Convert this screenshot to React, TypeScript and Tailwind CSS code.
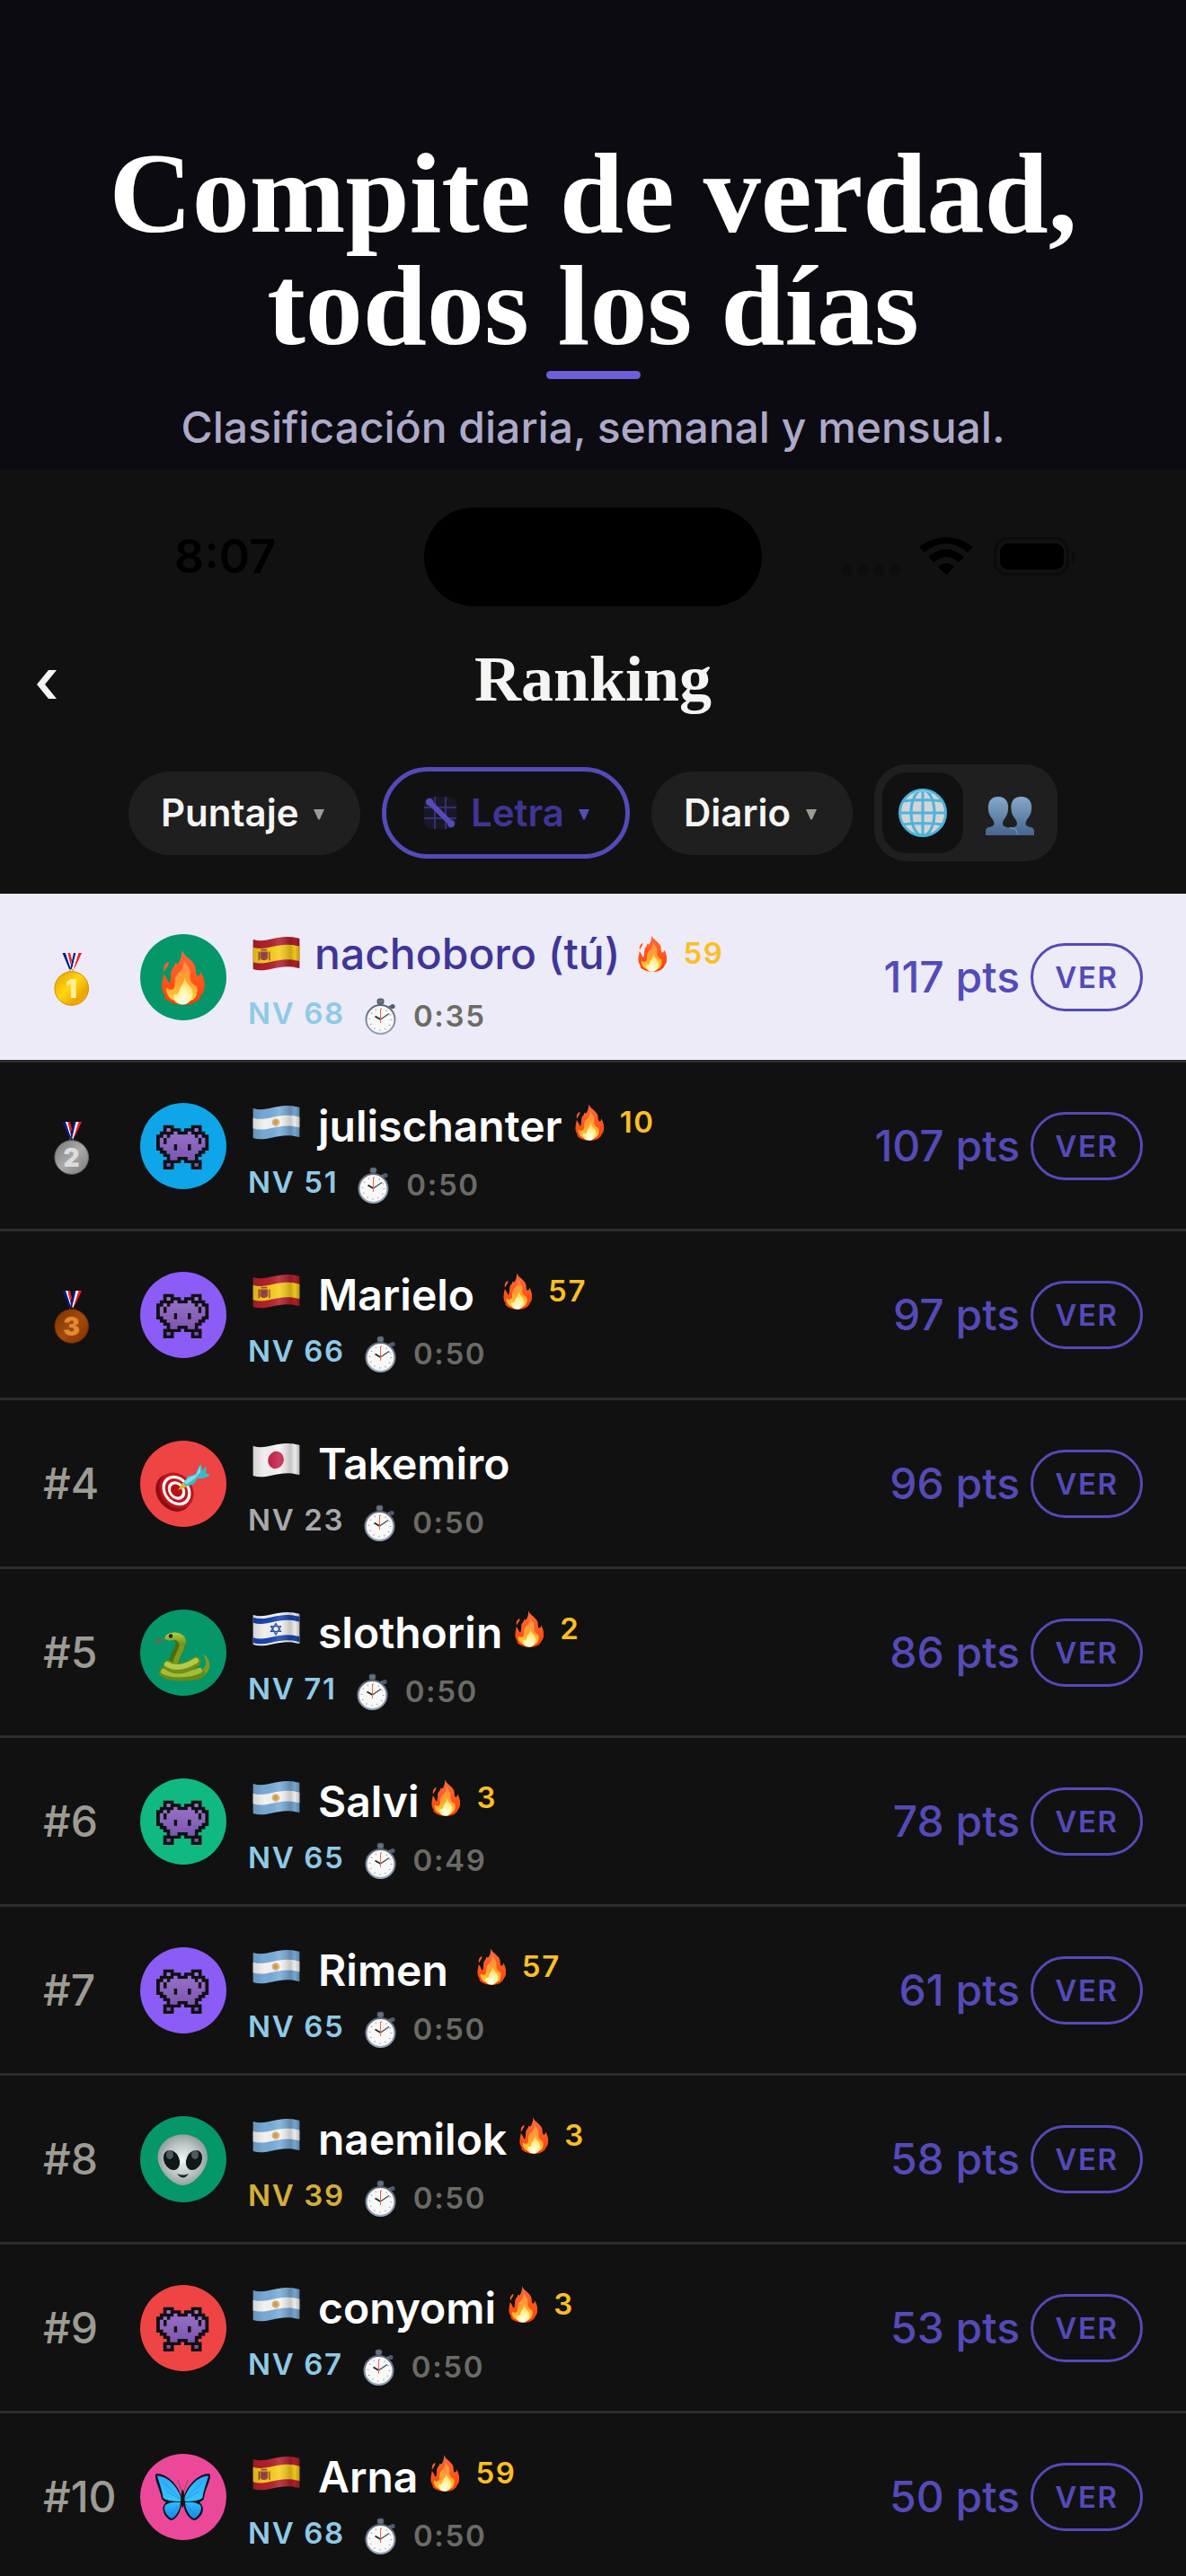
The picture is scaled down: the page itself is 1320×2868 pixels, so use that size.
import type { ReactNode } from 'react';
import clsx from 'clsx';

type Player = {
  rank: number;
  name: string;
  country: 'es' | 'ar' | 'jp' | 'il';
  avatar: 'flame' | 'invader' | 'dart' | 'snake' | 'alien' | 'butterfly';
  color: string;
  level: number;
  levelColor: string;
  time: string;
  streak?: number;
  points: number;
  me?: boolean;
  spaced?: boolean;
};

const players: Player[] = [
  { rank: 1, name: 'nachoboro (tú)', country: 'es', avatar: 'flame', color: 'bg-[#059669]', level: 68, levelColor: 'text-[#8ecae6]', time: '0:35', streak: 59, points: 117, me: true },
  { rank: 2, name: 'julischanter', country: 'ar', avatar: 'invader', color: 'bg-[#0ea5e9]', level: 51, levelColor: 'text-[#8ecae6]', time: '0:50', streak: 10, points: 107 },
  { rank: 3, name: 'Marielo', country: 'es', avatar: 'invader', color: 'bg-[#8b5cf6]', level: 66, levelColor: 'text-[#8ecae6]', time: '0:50', streak: 57, points: 97, spaced: true },
  { rank: 4, name: 'Takemiro', country: 'jp', avatar: 'dart', color: 'bg-[#ef4444]', level: 23, levelColor: 'text-[#a8a9ad]', time: '0:50', points: 96 },
  { rank: 5, name: 'slothorin', country: 'il', avatar: 'snake', color: 'bg-[#059669]', level: 71, levelColor: 'text-[#8ecae6]', time: '0:50', streak: 2, points: 86 },
  { rank: 6, name: 'Salvi', country: 'ar', avatar: 'invader', color: 'bg-[#10b981]', level: 65, levelColor: 'text-[#8ecae6]', time: '0:49', streak: 3, points: 78 },
  { rank: 7, name: 'Rimen', country: 'ar', avatar: 'invader', color: 'bg-[#8b5cf6]', level: 65, levelColor: 'text-[#8ecae6]', time: '0:50', streak: 57, points: 61, spaced: true },
  { rank: 8, name: 'naemilok', country: 'ar', avatar: 'alien', color: 'bg-[#059669]', level: 39, levelColor: 'text-[#d4af37]', time: '0:50', streak: 3, points: 58 },
  { rank: 9, name: 'conyomi', country: 'ar', avatar: 'invader', color: 'bg-[#ef4444]', level: 67, levelColor: 'text-[#8ecae6]', time: '0:50', streak: 3, points: 53 },
  { rank: 10, name: 'Arna', country: 'es', avatar: 'butterfly', color: 'bg-[#ec4899]', level: 68, levelColor: 'text-[#8ecae6]', time: '0:50', streak: 59, points: 50 },
];

/* GRADIENTS shared by every icon */
function IconDefs() {
  return (
    <svg className="absolute h-0 w-0" aria-hidden="true">
      <defs>
        <linearGradient id="fire" x1="0" y1="0" x2="0" y2="1">
          <stop offset="0" stopColor="#ff6a3c" />
          <stop offset="0.45" stopColor="#ff5a1f" />
          <stop offset="1" stopColor="#ff3d0a" />
        </linearGradient>
        <linearGradient id="fireMid" x1="0" y1="0" x2="0" y2="1">
          <stop offset="0" stopColor="#ff8a45" />
          <stop offset="0.6" stopColor="#ffa52e" />
          <stop offset="1" stopColor="#ffd43a" />
        </linearGradient>
        <radialGradient id="fireCore" cx="0.5" cy="0.85" r="0.8">
          <stop offset="0" stopColor="#fffff0" />
          <stop offset="0.5" stopColor="#fff3a0" />
          <stop offset="1" stopColor="#ffd23a" />
        </radialGradient>
        <linearGradient id="medal1" x1="0" y1="0" x2="1" y2="1">
          <stop offset="0" stopColor="#e79a00" />
          <stop offset="0.45" stopColor="#ffd60f" />
          <stop offset="0.75" stopColor="#eca400" />
          <stop offset="1" stopColor="#f3bd1a" />
        </linearGradient>
        <linearGradient id="medal2" x1="0" y1="0" x2="1" y2="1">
          <stop offset="0" stopColor="#777" />
          <stop offset="0.5" stopColor="#aaa" />
          <stop offset="1" stopColor="#7a7a7a" />
        </linearGradient>
        <linearGradient id="medal3" x1="0" y1="0" x2="1" y2="1">
          <stop offset="0" stopColor="#7a2f04" />
          <stop offset="0.5" stopColor="#a34b0c" />
          <stop offset="1" stopColor="#7d3206" />
        </linearGradient>
        <linearGradient id="invader" x1="0" y1="0" x2="0" y2="1">
          <stop offset="0" stopColor="#9b73cc" />
          <stop offset="1" stopColor="#7650a8" />
        </linearGradient>
        <linearGradient id="cloth" x1="0" y1="0" x2="1" y2="0">
          <stop offset="0" stopColor="#000" stopOpacity="0.14" />
          <stop offset="0.25" stopColor="#000" stopOpacity="0.02" />
          <stop offset="0.55" stopColor="#fff" stopOpacity="0.12" />
          <stop offset="0.8" stopColor="#000" stopOpacity="0.2" />
          <stop offset="0.9" stopColor="#000" stopOpacity="0.04" />
          <stop offset="1" stopColor="#000" stopOpacity="0.25" />
        </linearGradient>
        <radialGradient id="alien" cx="0.5" cy="0.5" r="0.55">
          <stop offset="0" stopColor="#eef6f6" />
          <stop offset="0.6" stopColor="#b9c4c4" />
          <stop offset="1" stopColor="#8a9696" />
        </radialGradient>
        <linearGradient id="snake" x1="0" y1="0" x2="0" y2="1">
          <stop offset="0" stopColor="#b5cc3c" />
          <stop offset="1" stopColor="#6f8f16" />
        </linearGradient>
        <linearGradient id="wing" x1="0" y1="0" x2="0" y2="1">
          <stop offset="0" stopColor="#2fa8f8" />
          <stop offset="0.55" stopColor="#35c3ff" />
          <stop offset="1" stopColor="#1489ea" />
        </linearGradient>
        <linearGradient id="people" x1="0" y1="0" x2="0" y2="1">
          <stop offset="0" stopColor="#84a9cb" />
          <stop offset="1" stopColor="#45658c" />
        </linearGradient>
        <linearGradient id="rim" x1="0" y1="0" x2="0" y2="1">
          <stop offset="0" stopColor="#5c6577" />
          <stop offset="1" stopColor="#94a6bd" />
        </linearGradient>
      </defs>
    </svg>
  );
}

function FlameShape() {
  return (
    <>
      <path fill="url(#fire)" d="M23 0C25 8 35 10 38 19C39 23 38 27 40 29C42 29 44 28 44 24C47 30 49 37 48 42C48 48 44 50 43 54C40 56 39 58 36 59C32 61 28 61 24 61C18 61 13 60 10 58C7 57 5 55 3 52L5 52C1 47 0 42 1 37C1 33 3 30 2 27C6 29 6 34 9 37C12 32 9 24 13 20C15 18 15 16 16 14L18 16C21 13 23 7 23 0ZM8 13C9 18 5 20 3 25C2 19 3 16 8 13Z" />
      <path fill="url(#fireMid)" d="M25 11C28 17 33 20 32 28C31 34 35 39 39 40C41 45 40 51 37 54C33 59 15 59 10 54C6 50 5 45 6 42C10 46 14 45 15 40C15 35 15 30 18 27C22 24 26 19 25 11Z" />
      <path fill="url(#fireCore)" d="M26 30C27 38 34 40 35 47C36 55 30 61 24 61C17 61 12 56 14 49C16 51 19 50 20 46C21 40 26 38 26 30Z" />
    </>
  );
}

function Flame() {
  return (
    <svg className="mt-1 h-[41px] w-8 shrink-0" viewBox="0 0 48 61" aria-hidden="true">
      <FlameShape />
    </svg>
  );
}

function Medal({ place }: { place: number }) {
  const fill = ['url(#medal1)', 'url(#medal2)', 'url(#medal3)'][place - 1];
  const ink = ['#ffee9a', '#dcdcdc', '#e38a2c'][place - 1];
  const edge = ['#d48c00', '#6a6a6a', '#6b2903'][place - 1];
  return (
    <svg className="ml-3 h-16 w-10" viewBox="0 0 40 64" role="img" aria-label={`Puesto ${place}`}>
      <path fill="#0a1a8c" d="M9.500 5H13L19 23L17 23Z" />
      <path fill="#fff" d="M13 5H15.500L19.500 22L19 23Z" />
      <path fill="#f01c2c" d="M15.500 5H18L20 13L18.500 18Z" />
      <path fill="#0a1a8c" d="M22 5H24.500L20 23L18 23Z" />
      <path fill="#fff" d="M24.500 5H28L21.500 24H20Z" />
      <path fill="#f01c2c" d="M27.500 5H31L24.500 19L21.500 24Z" />
      <circle cx="19.500" cy="25" r="2" fill="none" stroke={edge} strokeWidth="1" />
      <circle cx="19.700" cy="44.500" r="18.800" fill={fill} stroke={edge} strokeWidth="1" />
      <text x="19.500" y="54.500" textAnchor="middle" fontSize="28" fontWeight="900" fontFamily="Inter, sans-serif" fill={ink}>
        {place}
      </text>
    </svg>
  );
}

const invaderRows = [
  '..KKK.....KKK..',
  '..KPKKK.KKKPK..',
  '.KKKKPKKKPKKKK.',
  'KKPKPPPPPPPKPKK',
  'KPKPPPPPPPPPKPK',
  'KPKPPPPPPPPPKPK',
  'KPPPPKPPPKPPPPK',
  'KKPPPKPPPKPPPKK',
  '.KKPPPPPPPPPKK.',
  '..KKPPPPPPPKK..',
  '...KPPKKKPPK...',
  '..KKKKK.KKKKK..',
  '..KPK.....KPK..',
  '..KKK.....KKK..',
];

function cells(kind: string) {
  return invaderRows
    .map((row, y) => row.split('').map((c, x) => (c === kind ? `M${x} ${y}h1.04v1.04h-1.04z` : '')).join(''))
    .join('');
}

const avatars: Record<Player['avatar'], ReactNode> = {
  flame: (
    <g transform="translate(23.500 17.500)">
      <FlameShape />
    </g>
  ),
  invader: (
    <g transform="translate(18 24.700) scale(3.870 3.520)">
      <path fill="#111014" d={cells('K')} />
      <path fill="url(#invader)" d={cells('P')} />
    </g>
  ),
  dart: (
    <>
      <ellipse cx="37" cy="58" rx="18" ry="22.500" transform="rotate(-38 37 58)" fill="#8d0f14" />
      <g transform="rotate(-38 40.500 55.500)">
        <ellipse cx="40.500" cy="55.500" rx="17.500" ry="21.500" fill="#c4141b" />
        <ellipse cx="40.500" cy="55.500" rx="14.500" ry="18" fill="#fff" />
        <ellipse cx="40.500" cy="55.500" rx="11.500" ry="14.500" fill="#c4141b" />
        <ellipse cx="40.500" cy="55.500" rx="8.800" ry="11" fill="#fff" />
        <ellipse cx="40.500" cy="55.500" rx="6" ry="7.500" fill="#b81219" />
      </g>
      <path fill="#e9b21d" d="M42 55L47 47L49 47L52 51L50 52Z" />
      <path fill="#3db8c6" d="M48 47L53 40L62 37L65 29L68 26L69 33L74 28L73 36L78 38L76 40L70 42L64 42L60 48L51 51Z" />
      <path fill="#7fdde6" d="M49 46L54 41L62 38L67 28L67 35L61 42L51 49Z" />
    </>
  ),
  snake: (
    <>
      <path fill="none" stroke="#8a5a4c" strokeWidth="1.500" d="M30 31C26 34 24 34 22 35L16 33M22 35L17 37" />
      <path fill="#7d9c20" d="M70 49C78 55 80 64 74 71C70 76 62 78 56 77L58 70C66 72 74 66 73 57Z" />
      <path fill="none" stroke="#6a8a18" strokeWidth="12" strokeLinecap="round" d="M27 70C36 75 56 74 66 71" />
      <path fill="none" stroke="#a3bd3a" strokeWidth="6" strokeLinecap="round" d="M26 69C36 74 56 73 66 68" />
      <path fill="none" stroke="#4d6b0c" strokeWidth="11" d="M43 31C49 42 39 48 37 61" />
      <path fill="none" stroke="#7d9820" strokeWidth="6" d="M45 31C51 42 41 48 39 61" />
      <path fill="none" stroke="#6f8f16" strokeWidth="11" strokeLinecap="round" d="M31 62C42 70 54 64 62 58" />
      <path fill="none" stroke="#b3cb48" strokeWidth="6" strokeLinecap="round" d="M30 61C42 68 54 62 62 57" />
      <path fill="url(#snake)" d="M27 32C28 28 33 25 39 25.500C47 26 52 31 51 38L44 40C43 36 40 33 36 34C32 35 29 34 27 32Z" />
      <circle cx="34" cy="29.500" r="2.200" fill="#2a1a10" />
    </>
  ),
  alien: (
    <>
      <path fill="url(#alien)" d="M47.500 20.500C63 20.500 75 31 75 46C75 59 60 77 47.500 77C35 77 19.500 59 19.500 46C19.500 31 32 20.500 47.500 20.500Z" />
      <ellipse cx="35" cy="49" rx="8.500" ry="11.500" transform="rotate(-25 35 49)" fill="#10181a" />
      <ellipse cx="60" cy="49" rx="8.500" ry="11.500" transform="rotate(25 60 49)" fill="#10181a" />
      <ellipse cx="33" cy="43" rx="4" ry="5" fill="#8d9a9c" opacity="0.500" />
      <ellipse cx="61" cy="43" rx="4" ry="5" fill="#8d9a9c" opacity="0.500" />
      <path d="M41 64Q47.500 67 54 64Q48 73 41 64Z" fill="#1b2426" />
    </>
  ),
  butterfly: (
    <>
      <path fill="#10131f" d="M45.500 47C42 34 30 22 18 22C14 26 22 38 24 50C25 52 28 53 29 54C22 59 26 70 34 74C38 75 45 66 46 57H48.500C49 66 57 75 61 74C70 70 73 59 66 54C67 53 70 52 71 50C72 38 81 26 77 22C65 22 53 34 49 47Z" />
      <path fill="url(#wing)" d="M46 50C42 38 32 25 19 24.500C21 32 25 42 25.500 49C29 52 36 53 45 53ZM45 54C38 53 32 54 28 57C25 62 30 70 35 72C39 71 45 62 45 54ZM49 50C53 38 63 25 76 24.500C74 32 70 42 69.500 49C66 52 59 53 50 53ZM50 54C57 53 63 54 67 57C70 62 65 70 60 72C56 71 50 62 50 54Z" />
      <path fill="none" stroke="#1a7fd4" strokeWidth="0.600" d="M45 50L26 32M45 51L30 42M45 55L35 67M50 50L69 32M50 51L65 42M50 55L60 67" />
      <path fill="none" stroke="#8c4a70" strokeWidth="1" d="M46.500 43L42 29M48 43L53 29" />
      <ellipse cx="47.300" cy="50" rx="2" ry="10" fill="#1b1410" />
    </>
  ),
};

// one waving stripe of a flag, 53px long
function stripe(y: number, h: number) {
  return `M0 ${y}C13 ${y + 4} 25 ${y - 3} 38 ${y - 3}C45 ${y - 3} 49 ${y - 2} 53 ${y - 1}v${h}C49 ${y + h - 2} 45 ${y + h - 3} 38 ${y + h - 3}C25 ${y + h - 3} 13 ${y + h + 4} 0 ${y + h}Z`;
}

function Flag({ country }: { country: Player['country'] }) {
  return (
    <svg className="mt-1.5 ml-[5px] h-[38px] w-[53px] shrink-0" viewBox="0 0 53 39" role="img" aria-label={country.toUpperCase()}>
      {country === 'es' && (
        <>
          <path fill="#b3202e" d={stripe(3, 34)} />
          <path fill="#f8ce1c" d={stripe(12, 17)} />
          <path fill="#a3473a" d="M8 17h9v8q-4.500 4-9 0zM6 17h1.500v10H6zM18 17h1.500v10H18zM9 14h7v2H9z" />
          <path fill="#5a4a86" d="M11 19h3v4h-3z" />
        </>
      )}
      {country === 'ar' && (
        <>
          <path fill="#78add9" d={stripe(3, 34)} />
          <path fill="#f7f7f7" d={stripe(14, 12)} />
          <circle cx="26" cy="19" r="4.500" fill="#dcae7c" />
          <circle cx="26" cy="19" r="2.500" fill="#d9952f" />
        </>
      )}
      {country === 'jp' && (
        <>
          <path fill="#f4f4f4" d={stripe(3, 34)} />
          <ellipse cx="26" cy="19" rx="9" ry="10" transform="rotate(20 26 19)" fill="#c8234a" />
        </>
      )}
      {country === 'il' && (
        <>
          <path fill="#f4f4f4" d={stripe(3, 34)} />
          <path fill="#1846b0" d={stripe(6, 6)} />
          <path fill="#1846b0" d={stripe(29, 6)} />
          <path fill="none" stroke="#1846b0" strokeWidth="1.400" d="M26 13L31.500 22H20.500ZM26 25.500L20.500 16H31.500Z" />
        </>
      )}
      <path fill="url(#cloth)" d={stripe(3, 34)} />
    </svg>
  );
}

function Stopwatch() {
  return (
    <svg className="h-[42px] w-9 shrink-0" viewBox="0 0 36 42" aria-hidden="true">
      <rect x="14" y="1" width="7" height="6" rx="2" fill="#667080" stroke="#3f4756" strokeWidth="0.800" />
      <path d="M26 12L29 9" stroke="#6a7486" strokeWidth="3" />
      <circle cx="31" cy="9.500" r="2.600" fill="#4e5a70" />
      <circle cx="17.500" cy="24" r="16" fill="#f8f8f8" stroke="url(#rim)" strokeWidth="2" />
      <circle cx="17.500" cy="24" r="12" fill="none" stroke="#a8a8a8" strokeWidth="2" strokeDasharray="1 5.280" />
      <path d="M17.500 24L11.500 20.500" stroke="#222" strokeWidth="1.800" />
      <path d="M17.500 24L27 17.500" stroke="#3c4a60" strokeWidth="1.300" />
      <path d="M17.500 28V12" stroke="#f0653e" strokeWidth="1" />
    </svg>
  );
}

function Filter({ label, value, active, icon }: { label: string; value: string; active?: boolean; icon?: ReactNode }) {
  return (
    <label
      className={clsx(
        'flex items-center rounded-full pr-10',
        active ? 'h-[102px] border-[5px] border-[#544ab8] pl-[42px] text-[#403597]' : 'h-[93px] bg-[#1f1f1f] pl-9 text-[#f5f5f3]',
      )}
    >
      {icon}
      <select aria-label={label} className="appearance-none bg-transparent text-[42px] leading-[50px] font-semibold outline-none">
        <option>{value}</option>
      </select>
      <svg className={clsx('mt-1 ml-4 h-3 w-3', active ? 'fill-[#544ab8]' : 'fill-[#9c9b94]')} viewBox="0 0 12 12" aria-hidden="true">
        <path d="M0 0H12L7 11Q6 12 5 11Z" />
      </svg>
    </label>
  );
}

function GridIcon() {
  return (
    <svg className="mr-4 h-9 w-9" viewBox="0 0 36 36" aria-hidden="true">
      <rect width="36" height="36" rx="9" fill="#1a1826" />
      <path d="M12 0V36M24 0V36M0 12H36M0 24H36" stroke="#352f72" strokeWidth="2" />
      <path d="M6 6L30 30" stroke="#544ab8" strokeWidth="6" />
      <circle cx="6" cy="6" r="4.200" fill="#544ab8" />
      <circle cx="30" cy="30" r="4.200" fill="#544ab8" />
    </svg>
  );
}

function PlayerRow({ player }: { player: Player }) {
  return (
    <li className={clsx('flex h-[188px] items-center border-b-[3px] border-[#2c2c2c] px-12', player.me && 'bg-[#ecebf7]')}>
      <div className="w-[108px] shrink-0 text-[48px] leading-[58px] font-medium text-[#9c9b94]">
        {player.rank <= 3 ? <Medal place={player.rank} /> : `#${player.rank}`}
      </div>

      <div className={clsx('h-24 w-24 shrink-0 rounded-full', player.color)}>
        <svg className="h-24 w-24" viewBox="0 0 96 96" aria-hidden="true">
          {avatars[player.avatar]}
        </svg>
      </div>

      <div className="ml-6 h-[102px] min-w-0 flex-1">
        {/* Name + streak */}
        <div className="flex h-[58px] items-start">
          <Flag country={player.country} />
          <span
            className={clsx(
              'text-[48px] whitespace-nowrap',
              player.me ? 'ml-4 leading-[50px] font-medium text-[#403597]' : 'ml-5 leading-[58px] font-semibold text-white',
            )}
          >
            {player.name}
          </span>
          {player.streak && (
            <span className={clsx('flex items-start gap-[18px]', player.spaced ? 'ml-8' : player.me ? 'ml-5' : 'ml-3.5')}>
              <Flame />
              <span className="mt-1 text-[33px] leading-10 font-semibold tracking-wider text-[#fbbf24]">{player.streak}</span>
            </span>
          )}
        </div>

        {/* Level + time */}
        <div className="mt-[13px] flex items-start">
          <span className={clsx('text-[33px] leading-10 font-semibold tracking-wider', player.levelColor)}>NV {player.level}</span>
          <span className="mt-[3px] ml-[22px] flex items-start gap-[18px]">
            <Stopwatch />
            <span className="text-[33px] leading-10 font-semibold tracking-wider text-[#6b6b66]">{player.time}</span>
          </span>
        </div>
      </div>

      <span className="text-[48px] leading-[58px] font-medium text-[#544ab8]">{player.points} pts</span>
      <button type="button" className="ml-3 h-[76px] w-[125px] rounded-full border-[3px] border-[#544ab8] text-[33px] leading-10 font-semibold tracking-wider text-[#544ab8]">
        VER
      </button>
    </li>
  );
}

export default function App() {
  return (
    <main className="min-h-screen w-full overflow-hidden bg-[#111] font-['Inter',sans-serif]">
      <IconDefs />

      {/* HERO */}
      <header className="flex flex-col items-center bg-[#0c0b12] pt-[153px] pb-[17px] text-center">
        <h1 className="font-['Liberation_Serif',serif] text-[128px] leading-[125px] font-bold text-white">
          Compite de verdad,
          <br />
          todos los días
        </h1>
        <div className="mt-2.5 h-[9px] w-[105px] rounded-full bg-[#6c5fd8]" />
        <p className="mt-6 text-[48px] leading-[60px] font-medium text-[#aea9c8]">Clasificación diaria, semanal y mensual.</p>
      </header>

      {/* STATUS BAR */}
      <div className="grid grid-cols-3 items-center pt-[42px]">
        <span className="pl-[194px] text-[52px] leading-[60px] font-semibold text-black">8:07</span>
        <div className="h-[110px] w-[376px] justify-self-center rounded-full bg-black" />
        <svg className="mr-[123px] h-[44px] w-[260px] justify-self-end" viewBox="0 0 260 44" aria-hidden="true">
          <g fill="#0d0d0d">
            <rect x="0" y="31" width="11" height="11" rx="4" />
            <rect x="18" y="31" width="11" height="11" rx="4" />
            <rect x="36" y="31" width="11" height="11" rx="4" />
            <rect x="54" y="31" width="11" height="11" rx="4" />
          </g>
          <path d="M116 42L107 33Q116 25 125 33ZM102 28L96 22Q116 5 136 22L130 28Q116 16 102 28ZM92 17L86 11Q116 -11 146 11L140 17Q116 -3 92 17Z" />
          <rect x="170.500" y="1.500" width="81" height="40" rx="14" fill="none" stroke="#0b0b0b" strokeWidth="3" />
          <rect x="176" y="7" width="71" height="29" rx="9" />
          <path d="M256 15Q260 16 260 22T256 29Z" fill="#0b0b0b" />
        </svg>
      </div>

      {/* TITLE */}
      <div className="mt-[41px] grid grid-cols-3 items-center">
        <button type="button" aria-label="Volver" className="mt-3 ml-8 justify-self-start px-2 text-[#f5f5f3]">
          <svg className="h-9 w-6" viewBox="0 0 24 36" aria-hidden="true">
            <path fill="currentColor" d="M14 2H23L10 18L23 34H14L1 18Z" />
          </svg>
        </button>
        <h2 className="justify-self-center font-['Liberation_Serif',serif] text-[72px] leading-[80px] font-bold text-[#f5f5f3]">Ranking</h2>
      </div>

      {/* FILTERS */}
      <div className="mt-[55px] mb-9 flex items-center justify-center gap-6">
        <Filter label="Métrica" value="Puntaje" />
        <Filter label="Juego" value="Letra" active icon={<GridIcon />} />
        <Filter label="Periodo" value="Diario" />
        <div className="flex rounded-[36px] bg-[#1f1f1f] p-[9px]">
          <button type="button" aria-label="Global" className="flex h-[90px] w-[90px] items-center justify-center rounded-[27px] bg-[#111]">
            <svg className="h-[54px] w-[54px]" viewBox="0 0 54 54" aria-hidden="true">
              <circle cx="27" cy="27" r="25.500" fill="#d4d4d6" />
              <g fill="none" stroke="#4cb4da" strokeWidth="3">
                <circle cx="27" cy="27" r="25.500" />
                <ellipse cx="27" cy="27" rx="13" ry="25.500" />
                <path d="M27 1V53M1 27H53M5 14Q27 11 49 14M4 40Q27 37 50 40" />
              </g>
              <path d="M12 8Q27 -3 42 8" fill="none" stroke="#8fe0f5" strokeWidth="1" />
            </svg>
          </button>
          <button type="button" aria-label="Amigos" className="flex h-[90px] w-24 items-center justify-center pl-2">
            <svg className="mt-2 h-11 w-[54px]" viewBox="0 0 54 44" aria-hidden="true">
              <path fill="url(#people)" d="M14 0C22 0 26 6 25 14C25 22 19 25 19 30C19 34 24 34 27 34.500C30 34 35 34 35 30C35 25 28.500 22 28.500 14C27.500 6 31 0 39.500 0C48 0 52 6 51 14C51 22 44.500 25 44.500 30C44.500 35 54 32 54 38V43H0V38C0 32 9.500 35 9.500 30C9.500 25 3 22 3 14C2 6 6 0 14 0Z" />
              <path fill="none" stroke="#7fa3c4" strokeWidth="1" d="M27 34.500C33 35 35 38 35.500 42" />
            </svg>
          </button>
        </div>
      </div>

      {/* LEADERBOARD */}
      <ol>
        {players.map((player) => (
          <PlayerRow key={player.rank} player={player} />
        ))}
      </ol>
    </main>
  );
}
